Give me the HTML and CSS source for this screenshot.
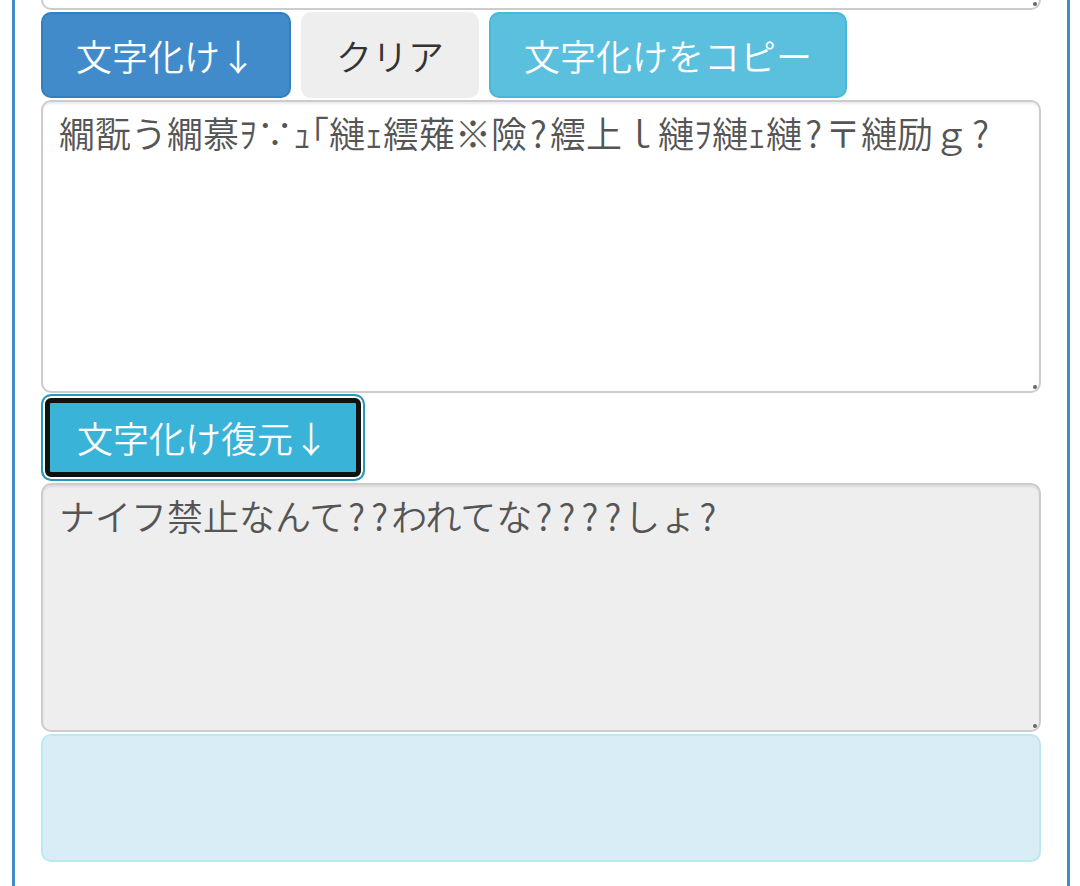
FILE: index.html
```html
<!DOCTYPE html>
<html lang="ja">
<head>
<meta charset="utf-8">
<title>文字化け</title>
<link rel="stylesheet" href="styles.css">
</head>
<body>
<div class="panel">
  <div class="field">
    <div class="box box-top"></div>
  </div>
  <div class="btn-row">
    <button class="btn btn-primary">文字化け↓</button>
    <button class="btn btn-default">クリア</button>
    <button class="btn btn-info">文字化けをコピー</button>
  </div>
  <div class="field">
    <div class="box box-mid">繝翫う繝慕ｦ∵ｭ｢縺ｪ繧薙※險<span class="q">?</span>繧上ｌ縺ｦ縺ｪ縺<span class="q">?</span>〒縺励ｇ<span class="q">?</span></div>
  </div>
  <div class="btn-row single">
    <button class="btn btn-info-focus">文字化け復元↓</button>
  </div>
  <div class="field">
    <div class="box box-out">ナイフ禁止なんて<span class="q">?</span><span class="q">?</span>われてな<span class="q">?</span><span class="q">?</span><span class="q">?</span><span class="q">?</span>しょ<span class="q">?</span></div>
  </div>
  <div class="alert"></div>
</div>
</body>
</html>
```
FILE: styles.css
```css
html, body {
  margin: 0;
  padding: 0;
  background: #fff;
  overflow: hidden;
}

body {
  font-family: "Noto Sans CJK JP", "Noto Sans", sans-serif;
  font-size: 36px;
  font-weight: 350;
  color: #333;
}

.panel {
  margin: -80px 10px 0 12px;
  border-left: 3px solid #428bca;
  border-right: 3px solid #428bca;
  padding: 0 26px 40px;
  display: flex;
  flex-direction: column;
}

.field {
  position: relative;
}

.field::after {
  content: "";
  position: absolute;
  right: 4px;
  bottom: 4px;
  width: 4px;
  height: 4px;
  border-radius: 50%;
  background: #666;
}

.box {
  width: 100%;
  box-sizing: border-box;
  border: 2px solid #ccc;
  border-radius: 10px;
  padding: 5px 16px;
  font-size: 36px;
  line-height: 51px;
  color: #555;
  background: #fff;
  box-shadow: inset 0 2px 2px rgba(0, 0, 0, 0.075);
  white-space: pre-wrap;
  overflow: hidden;
}

.q {
  display: inline-block;
  width: 23px;
  text-align: center;
}

.box-top {
  height: 90px;
}

.box-mid {
  height: 293px;
}

.box-out {
  height: 249px;
  background: #eee;
}

.btn-row {
  display: flex;
  gap: 10px;
  margin-top: 2px;
  margin-bottom: 2px;
}

.btn-row.single {
  margin-top: 1px;
}

.btn {
  display: inline-flex;
  align-items: center;
  justify-content: center;
  box-sizing: border-box;
  height: 86px;
  padding: 0 33px;
  border: 2px solid transparent;
  border-radius: 10px;
  font-family: "Noto Sans CJK JP", "Noto Sans", sans-serif;
  font-size: 36px;
  font-weight: 350;
  line-height: 51px;
  white-space: nowrap;
  cursor: pointer;
}

.btn-primary {
  background: #428bca;
  border-color: #357ebd;
  color: #fff;
}

.btn-default {
  background: #eee;
  border-color: #eee;
  color: #333;
}

.btn-info {
  background: #5bc0de;
  border-color: #46b8da;
  color: #fff;
}

.btn-info-focus {
  width: 324px;
  height: 87px;
  background: #39b3d7;
  border-color: #269abc;
  color: #fff;
  box-shadow: inset 0 0 0 2px #fff, inset 0 0 0 7px #111;
}

.alert {
  margin-top: 2px;
  height: 128px;
  box-sizing: border-box;
  background: #d9edf7;
  border: 2px solid #bce8f1;
  border-radius: 10px;
}
```
